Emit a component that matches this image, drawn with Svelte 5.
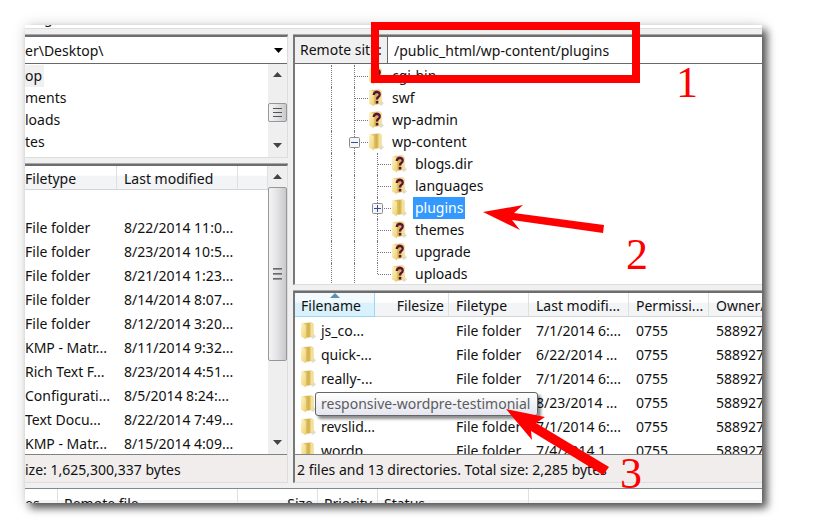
<script>
  const localTree = ['op', 'ments', 'loads', 'tes'];

  const localFiles = [
    ['File folder', '8/22/2014 11:0...'],
    ['File folder', '8/23/2014 10:5...'],
    ['File folder', '8/21/2014 1:23...'],
    ['File folder', '8/14/2014 8:07...'],
    ['File folder', '8/12/2014 3:20...'],
    ['KMP - Matr...', '8/11/2014 9:32...'],
    ['Rich Text F...', '8/23/2014 4:51...'],
    ['Configurati...', '8/5/2014 8:24:...'],
    ['Text Docu...', '8/22/2014 7:49...'],
    ['KMP - Matr...', '8/15/2014 4:09...']
  ];

  const remoteTree = [
    { name: 'cgi-bin', level: 1, unknown: true },
    { name: 'swf', level: 1, unknown: true },
    { name: 'wp-admin', level: 1, unknown: true },
    { name: 'wp-content', level: 1, toggle: 'minus' },
    { name: 'blogs.dir', level: 2, unknown: true },
    { name: 'languages', level: 2, unknown: true },
    { name: 'plugins', level: 2, toggle: 'plus', selected: true },
    { name: 'themes', level: 2, unknown: true },
    { name: 'upgrade', level: 2, unknown: true },
    { name: 'uploads', level: 2, unknown: true, last: true }
  ];

  const remoteFiles = [
    { name: 'js_co...', date: '7/1/2014 6:...' },
    { name: 'quick-...', date: '6/22/2014 ...' },
    { name: 'really-...', date: '7/1/2014 6:...' },
    { name: '', date: '8/23/2014 ...', tip: 'responsive-wordpre-testimonial' },
    { name: 'revslid...', date: '7/1/2014 6:...' },
    { name: 'wordp...', date: '7/4/2014 1...' }
  ];
</script>

{#snippet folder(unknown)}
  <svg class="folder" width="16" height="18" viewBox="0 0 16 18" aria-hidden="true">
    <defs>
      <linearGradient id="spine" x1="0" x2="1">
        <stop offset="0" stop-color="#f6e49c" />
        <stop offset=".55" stop-color="#d3b04c" />
        <stop offset="1" stop-color="#ecd488" />
      </linearGradient>
      <linearGradient id="cover" x1="0" y1="0" x2="1" y2="1">
        <stop offset="0" stop-color="#fdf5cc" />
        <stop offset="1" stop-color="#ecd070" />
      </linearGradient>
    </defs>
    <path d="M11 15.500L13 11L16 14.500L13 17Z" fill="#cfcfcf" opacity=".7" />
    <path d="M2 1L12 .5L13.500 2V14.500L9 15.500L4 16Z" fill="url(#spine)" />
    <path d="M10.500 1L12.500 .8L13.500 2V14.500L10.500 15Z" fill="#f3e09a" />
    <path d="M1 1.500L2 .8L6 3.500V17.500L1 14.500Z" fill="url(#cover)" />
    {#if unknown}
      <path d="M5.800 6Q5.800 3 8.800 3Q11.700 3 11.700 5.400Q11.700 7 10.200 8Q9 8.800 9 10.600" fill="none" stroke="#5a1238" stroke-width="2.300" />
      <rect x="7.800" y="12" width="2.500" height="2.500" fill="#5a1238" />
    {/if}
  </svg>
{/snippet}

{#snippet arrow(down)}
  <svg class="arrow" width="9" height="5" viewBox="0 0 9 5" aria-hidden="true">
    <path d={down ? 'M0 0H9L4.500 5Z' : 'M0 5H9L4.500 0Z'} fill="#444" />
  </svg>
{/snippet}

<main>
  <div class="frame">
    <div class="strip"><span>g</span></div>

    <div class="panes">
      <section class="side local">
        <div class="box">
          <div class="path">
            <input aria-label="Local site" value={'er\\Desktop\\'} />
            <button class="drop" aria-label="Show local folders">
              <svg width="9" height="5" viewBox="0 0 9 5"><path d="M0 0H9L4.500 5Z" /></svg>
            </button>
          </div>
          <div class="scroller localtree">
            <ul>
              {#each localTree as name, i}
                <li><span class:current={i === 0}>{name}</span></li>
              {/each}
            </ul>
            <div class="bar">
              {@render arrow(false)}
              <div class="thumb small"><i></i><i></i><i></i></div>
              {@render arrow(true)}
            </div>
          </div>
        </div>

        <div class="box">
          <div class="scroller list">
            <table class="localtable">
              <colgroup><col class="c92" /><col class="c121" /><col /></colgroup>
              <thead>
                <tr><th>Filetype</th><th>Last modified</th><th></th></tr>
              </thead>
              <tbody>
                <tr><td></td><td></td><td></td></tr>
                {#each localFiles as [type, date]}
                  <tr><td>{type}</td><td>{date}</td><td></td></tr>
                {/each}
              </tbody>
            </table>
            <div class="bar">
              {@render arrow(false)}
              <div class="thumb long"><i></i><i></i><i></i></div>
              {@render arrow(true)}
            </div>
          </div>
          <div class="status">ize: 1,625,300,337 bytes</div>
        </div>
      </section>

      <section class="side remote">
        <div class="box">
          <div class="path">
            <label for="remote">Remote site:</label>
            <input id="remote" value="/public_html/wp-content/plugins" />
          </div>
          <ul class="remotetree">
            {#each remoteTree as node}
              <li>
                <span class="guide"></span>
                {#if node.level === 2}<span class="guide"></span>{/if}
                <span class="branch" class:last={node.last}>
                  {#if node.toggle}
                    <button class="toggle" aria-label={node.toggle === 'plus' ? 'Expand' : 'Collapse'}>
                      <svg width="11" height="11" viewBox="0 0 11 11">
                        <rect x=".5" y=".5" width="10" height="10" rx="1" fill="#f6f6f6" stroke="#8c8c8c" />
                        <path d={node.toggle === 'plus' ? 'M2 5.500H9M5.500 2V9' : 'M2 5.500H9'} stroke="#2f4fa5" />
                      </svg>
                    </button>
                  {/if}
                </span>
                {@render folder(node.unknown)}
                <span class="name" class:selected={node.selected}>{node.name}</span>
              </li>
            {/each}
          </ul>
        </div>

        <div class="box">
          <div class="list">
            <table class="remotetable">
              <colgroup>
                <col class="c80" /><col class="c74" /><col class="c80" /><col class="c100" /><col class="c80" /><col />
              </colgroup>
              <thead>
                <tr>
                  <th class="sorted">
                    <svg class="sort" width="10" height="5" viewBox="0 0 10 5" aria-hidden="true"><path d="M0 5L5 0L10 5Z" fill="#5d8fae" /></svg>
                    Filename
                  </th>
                  <th class="right">Filesize</th>
                  <th>Filetype</th>
                  <th>Last modifi...</th>
                  <th>Permissi...</th>
                  <th class="end">Owner/</th>
                </tr>
              </thead>
              <tbody>
                {#each remoteFiles as file}
                  <tr>
                    <td class="file">
                      <div>
                        {@render folder(false)}
                        <span>{file.name}</span>
                        {#if file.tip}<span class="tip" role="tooltip">{file.tip}</span>{/if}
                      </div>
                    </td>
                    <td></td>
                    <td>File folder</td>
                    <td>{file.date}</td>
                    <td>0755</td>
                    <td>588927</td>
                  </tr>
                {/each}
              </tbody>
            </table>
          </div>
          <div class="status">2 files and 13 directories. Total size: 2,285 bytes</div>
        </div>
      </section>
    </div>

    <div class="queue">
      <span class="c33">es</span>
      <span class="c180">Remote file</span>
      <span class="c80 right">Size</span>
      <span class="c60">Priority</span>
      <span class="c151">Status</span>
    </div>
  </div>

  <div class="outline"></div>
  <svg class="arrows" width="840" height="528" viewBox="0 0 840 528" aria-hidden="true">
    <path d="M483 212L523 205L514 213L604 225L603 233L512 220L520 230Z" />
    <path d="M506 409L545 417L536 423L609 467L603 475L531 431L532 440Z" />
  </svg>
  <span class="mark one">1</span>
  <span class="mark two">2</span>
  <span class="mark three">3</span>
</main>

<style>
  :global(body) { margin: 0; background: #fff; }
  main {
    position: relative;
    padding: 25px 78px 25px 25px;
    font: 14px/22px "Noto Sans", "Open Sans", sans-serif;
    color: #111;
    overflow: hidden;
  }
  .frame {
    height: 478px;
    display: flex;
    flex-direction: column;
    overflow: hidden;
    background: #f0f0f0;
    box-shadow: 5px 5px 8px rgba(0, 0, 0, .65), 0 0 14px rgba(0, 0, 0, .14);
  }
  ul { list-style: none; margin: 0; padding: 0; }
  button { border: 0; padding: 0; background: none; display: block; }
  svg { display: block; }

  .strip {
    flex: none;
    height: 3px;
    margin-bottom: 6px;
    background: #fff;
    border-bottom: 1px solid #ddd;
    overflow: hidden;
    padding-left: 19px;
  }
  .strip span { display: block; margin-top: -18px; }

  .panes { flex: none; display: flex; gap: 5px; }
  .side { display: flex; flex-direction: column; gap: 6px; }
  .local { flex: none; width: 263px; }
  .remote { flex: 1; min-width: 0; }
  .box {
    background: #fff;
    border-top: 2px solid #6d6d6d;
    border-bottom: 1px solid #ddd;
    box-shadow: 0 -1px #a8a8a8;
    overflow: hidden;
  }
  .local .box { border-right: 1px solid #ddd; }
  .remote .box { border-left: 2px solid #777; }

  .path {
    display: flex;
    align-items: center;
    height: 26px;
    border-bottom: 1px solid #696969;
  }
  .path input {
    flex: 1;
    min-width: 0;
    height: 26px;
    box-sizing: border-box;
    border: 0;
    outline: 0;
    padding: 0;
    font: inherit;
    color: inherit;
    background: #fff;
  }
  .path label {
    width: 87px;
    height: 26px;
    line-height: 26px;
    padding-left: 5px;
    background: #f0f0f0;
    border-right: 1px solid #696969;
    white-space: nowrap;
  }
  .remote .path input { padding-left: 6px; }
  .drop { width: 18px; padding-left: 5px; }

  .scroller { display: flex; }
  .localtree { height: 93px; }
  .localtree ul { flex: 1; padding-top: 1px; }
  .localtree li { height: 22px; }
  .localtree span { display: inline-block; padding-right: 2px; }
  .current { background: #f0f0f0; }

  .bar {
    flex: none;
    width: 19px;
    display: flex;
    flex-direction: column;
    align-items: center;
    justify-content: space-between;
    box-sizing: border-box;
    padding: 8px 0 9px;
    background: #efefef;
  }
  .thumb {
    width: 19px;
    box-sizing: border-box;
    border: 1px solid #979797;
    border-radius: 2px;
    background: linear-gradient(90deg, #f4f4f4, #e4e4e6 45%, #c8c9cc);
    display: flex;
    flex-direction: column;
    align-items: center;
    justify-content: center;
    gap: 3px;
  }
  .thumb i { width: 9px; height: 2px; background: linear-gradient(#555, #aaa); }
  .small { height: 19px; margin-top: 4px; }
  .small i { height: 1px; background: #555; }
  .long { height: 174px; margin-bottom: 72px; }

  .remotetree { height: 220px; padding-top: 1px; box-sizing: border-box; }
  .remotetree li { display: flex; height: 22px; padding-left: 36px; }
  .guide { width: 22px; border-left: 1px dotted #777; }
  .branch { position: relative; width: 13px; border-left: 1px dotted #777; }
  .branch::after {
    content: "";
    position: absolute;
    left: 0;
    right: 0;
    top: 11px;
    border-top: 1px dotted #777;
  }
  .branch.last { height: 11px; }
  .toggle { position: absolute; z-index: 1; left: -6px; top: 6px; }
  .folder { flex: none; margin-top: 2px; }
  .name { margin-left: 6px; padding: 0 2px; }
  .name.selected { background: #3399ff; color: #fff; }

  .list { overflow: hidden; }
  .local .list { height: 288px; }
  .remote .list { height: 161px; }
  table { border-collapse: separate; border-spacing: 0; table-layout: fixed; }
  .localtable { flex: 1; width: 100%; align-self: flex-start; }
  .remotetable { width: 100%; }
  .c33 { width: 33px; }
  .c60 { width: 60px; }
  .c74 { width: 74px; }
  .c80 { width: 80px; }
  .c92 { width: 92px; }
  .c100 { width: 100px; }
  .c121 { width: 121px; }
  .c151 { width: 151px; }
  .c180 { width: 180px; }
  th, td {
    box-sizing: border-box;
    height: 24px;
    padding: 0 0 0 7px;
    text-align: left;
    font-weight: 400;
    line-height: 22px;
    white-space: nowrap;
    overflow: hidden;
  }
  th {
    position: relative;
    line-height: 21px;
    padding-top: 2px;
    border-right: 1px solid #e0e0e0;
    border-bottom: 1px solid #d5d5d5;
    background: linear-gradient(#fff 40%, #f3f4f6 45%, #f3f4f6);
  }
  .end { border-right: 0; }
  .localtable td:first-child, .localtable th:first-child { padding-left: 0; }
  .right { text-align: right; padding-right: 4px; }
  .sorted {
    background: linear-gradient(#f2fafe 40%, #d9f1fb 45%, #d9f1fb);
    border-color: #96d9f9;
    padding-left: 6px;
  }
  .sort { position: absolute; left: 35px; top: 0; }
  tbody::before { content: ""; display: block; height: 2px; }
  .file { overflow: visible; padding-left: 5px; }
  .file div { position: relative; display: flex; gap: 5px; }
  .tip {
    position: absolute;
    z-index: 2;
    left: 15px;
    top: -1px;
    padding: 0 7px 0 5px;
    border: 1px solid #666;
    border-radius: 3px;
    background: linear-gradient(#fff, #e4e5f0);
    box-shadow: 3px 3px 3px rgba(0, 0, 0, .45);
    color: #5c5c5c;
  }

  .status {
    height: 27px;
    line-height: 29px;
    border-top: 1px solid #828282;
    background: #f0edec;
    white-space: nowrap;
  }
  .remote .status { padding-left: 2px; }

  .queue {
    flex: none;
    display: flex;
    height: 32px;
    margin-top: 5px;
    border-top: 1px solid #828790;
    background: linear-gradient(#fff 11px, #f3f4f6 11px);
  }
  .queue span {
    flex: none;
    box-sizing: border-box;
    padding-left: 6px;
    line-height: 30px;
    border-right: 1px solid #e0e0e0;
  }
  .queue span:first-child { padding-left: 0; }

  .outline {
    position: absolute;
    z-index: 3;
    left: 371px;
    top: 22px;
    width: 253px;
    height: 45px;
    border: 8px solid #f00;
    pointer-events: none;
  }
  .arrows { position: absolute; z-index: 3; left: 0; top: 0; fill: #f00; pointer-events: none; }
  .mark {
    position: absolute;
    z-index: 3;
    font: 44px/44px "Liberation Serif", serif;
    color: #f00;
  }
  .one { left: 676px; top: 61px; }
  .two { left: 626px; top: 233px; }
  .three { left: 620px; top: 452px; }
</style>
